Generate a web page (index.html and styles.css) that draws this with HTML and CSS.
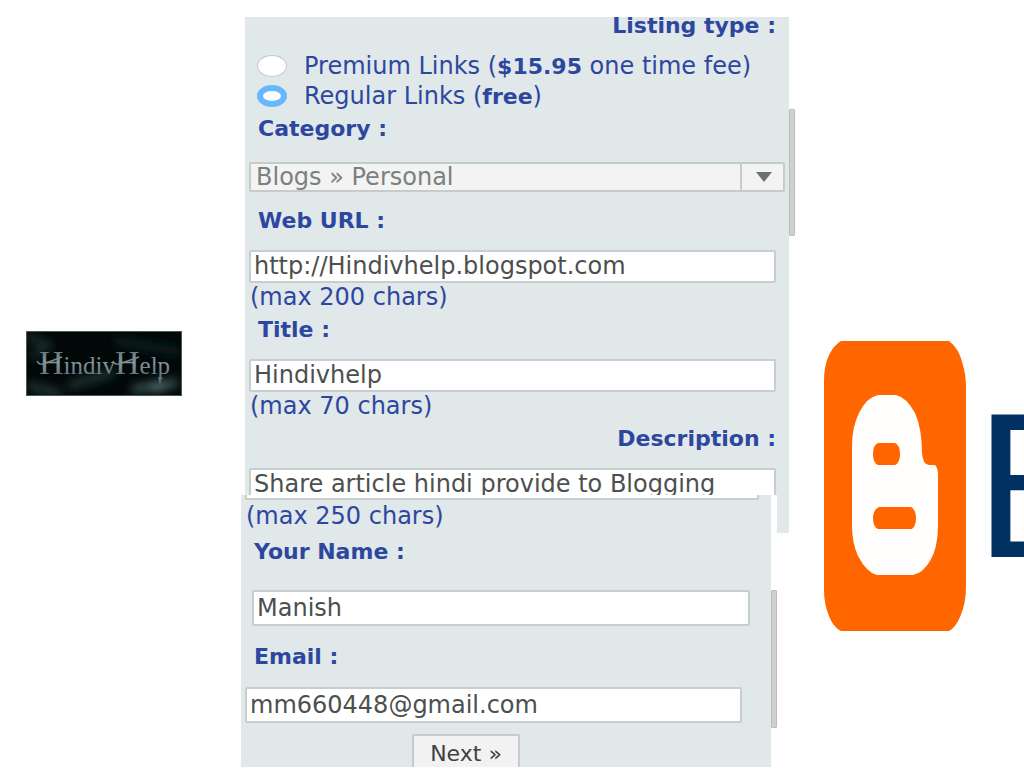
FILE: index.html
```html
<!DOCTYPE html>
<html lang="en">
<head>
<meta charset="utf-8">
<meta name="viewport" content="width=device-width, initial-scale=1">
<title>HindivHelp - Submit a link</title>
<link rel="stylesheet" href="styles.css">
</head>
<body>
<main class="page">
  <aside class="brand">
    <svg class="brand-logo" viewBox="0 0 156 65" role="img" aria-label="HindivHelp">
      <defs>
        <filter id="smoke" x="-50%" y="-50%" width="200%" height="200%"><feGaussianBlur stdDeviation="5"/></filter>
        <linearGradient id="steel" x1="0" y1="0" x2="0" y2="1">
          <stop offset="0" stop-color="#52646a"/><stop offset=".5" stop-color="#84979d"/><stop offset="1" stop-color="#52666c"/>
        </linearGradient>
      </defs>
      <rect width="156" height="65" fill="#020808"/>
      <g filter="url(#smoke)" fill="none" stroke-linecap="round">
        <path d="M2 6 L22 14 L8 24" stroke="#1b2e2e" stroke-width="7"/>
        <path d="M4 55 L32 62 M45 54 L85 42" stroke="#263b3b" stroke-width="7"/>
        <path d="M110 58 L148 52" stroke="#35504f" stroke-width="9"/>
        <path d="M92 10 L150 20" stroke="#0f2022" stroke-width="8"/>
        <path d="M128 56 L136 57" stroke="#6d8987" stroke-width="5"/>
      </g>
      <text class="brand-name" x="13" y="43" fill="url(#steel)"><tspan class="brand-cap">H</tspan>indiv<tspan class="brand-cap">H</tspan>elp</text>
      <path d="M11 30 Q13 35 20 32 L36 26 M87 30 Q89 35 96 32 L113 26" fill="none" stroke="#788c92" stroke-width="1.5"/>
      <path d="M132 46 L134 54 L136 46" fill="#5b7076"/>
      <rect x=".5" y=".5" width="155" height="64" fill="none" stroke="#4c5757"/>
    </svg>
  </aside>

  <form class="listing">
    <section class="sheet sheet-main">
      <fieldset class="types">
        <legend class="label label-end">Listing type :</legend>
        <label class="option"><input class="radio" type="radio" name="type"><span>Premium Links (<b>$15.95</b> one time fee)</span></label>
        <label class="option"><input class="radio" type="radio" name="type" checked><span>Regular Links (<b>free</b>)</span></label>
      </fieldset>
      <label class="label" for="category">Category :</label>
      <div class="picker">
        <select class="select" id="category"><option>Blogs » Personal</option></select>
        <span class="picker-arrow"><svg width="16" height="10" viewBox="0 0 16 10"><path d="M0 0H16L8 10Z" fill="#6d716f"/></svg></span>
      </div>
      <label class="label label-spaced" for="url">Web URL :</label>
      <input class="field" id="url" type="text" value="http://Hindivhelp.blogspot.com">
      <p class="hint">(max 200 chars)</p>
      <label class="label" for="title">Title :</label>
      <input class="field" id="title" type="text" value="Hindivhelp">
      <p class="hint">(max 70 chars)</p>
      <label class="label label-end" for="description">Description :</label>
      <input class="field" id="description" type="text" value="Share article hindi provide to Blogging">
      <span class="scroll scroll-main"></span>
    </section>

    <section class="overlay">
      <div class="sheet sheet-contact">
        <div class="field-edge"></div>
        <p class="hint">(max 250 chars)</p>
        <label class="label" for="name">Your Name :</label>
        <input class="field field-name" id="name" type="text" value="Manish">
        <label class="label label-spaced" for="email">Email :</label>
        <input class="field field-email" id="email" type="text" value="mm660448@gmail.com">
        <button class="next" type="button">Next »</button>
      </div>
      <span class="scroll scroll-contact"></span>
    </section>
  </form>

  <aside class="blogger">
    <svg class="blogger-icon" viewBox="0 0 142 290" role="img" aria-label="Blogger">
      <path d="M17 0H125Q135 7 139 24Q142 34 142 45V245Q142 263 136 276Q132 286 125 290H17Q9 286 5 275Q0 263 0 249V40Q0 25 5 14Q10 4 17 0Z" fill="#ff6600"/>
      <path d="M54 54H72Q82 56 91 72Q98 88 98 112Q99 124 105 124H111Q114 127 114 134V184Q114 207 106 220Q99 232 89 234H53Q43 232 34 215Q28 202 28 184V105Q28 86 35 72Q43 56 54 54Z" fill="#fffefd"/>
      <path d="M54 102H71Q76 104 76 113Q76 122 71 124H54Q49 122 49 113Q49 104 54 102ZM55 166H87Q92 169 92 177Q92 185 88 188H54Q49 186 49 177Q49 169 55 166Z" fill="#ff6600"/>
    </svg>
    <span class="blogger-word">B</span>
  </aside>
</main>
</body>
</html>
```
FILE: styles.css
```css
* { box-sizing: border-box; }

body {
  margin: 0;
  background: #fefefe;
  color: #2d479f;
  font-family: "DejaVu Sans", sans-serif;
  font-size: 24px;
}

.page {
  display: grid;
  grid-template-columns: 241fr 554fr 229fr;
  min-height: 100vh;
  overflow: hidden;
}

.brand { padding: 331px 59px 0 26px; }
.brand-logo { display: block; width: 100%; }
.brand-name { font-family: "Liberation Serif", serif; font-size: 25px; }
.brand-cap { font-size: 34px; }

.listing { min-width: 0; padding-top: 17px; }

.sheet { background: #e0e8ea; }

.sheet-main {
  position: relative;
  height: 516px;
  margin: 0 6px 0 4px;
  padding: 0 13px 0 4px;
}

.types { position: relative; min-width: 0; margin: 0; padding: 34px 0 0; border: 0; }
.types .label { position: absolute; top: -9px; right: 0; padding-right: 0; }

.label {
  display: block;
  padding-left: 9px;
  line-height: 36px;
  font-size: 22px;
  font-weight: 700;
  white-space: nowrap;
}
.label-end { text-align: right; }
.label-spaced { margin-top: 11px; }

.option {
  display: flex;
  align-items: center;
  gap: 17px;
  padding-left: 8px;
  line-height: 30px;
  white-space: nowrap;
}
.option b { font-size: 22px; line-height: 1; }

.radio {
  appearance: none;
  flex: none;
  width: 30px;
  height: 22px;
  margin: 0;
  border: 1px solid #c4c8ca;
  border-radius: 50%;
  background: #fff;
}
.radio:checked { border: 6px solid #66b8fb; }

.picker { position: relative; margin: 15px -9px 0 0; }

.select {
  appearance: none;
  display: block;
  width: 100%;
  height: 30px;
  padding: 0 50px 0 5px;
  border: 2px solid #c6cbcb;
  border-radius: 2px;
  background: #f3f3f3;
  color: #7c807f;
  font: inherit;
  line-height: 26px;
}
.picker-arrow {
  position: absolute;
  inset: 0 0 0 auto;
  display: grid;
  place-items: center;
  width: 45px;
  border-left: 2px solid #c6cbcb;
  pointer-events: none;
}

.field {
  display: block;
  width: 100%;
  height: 33px;
  margin: 11px 0 0;
  padding: 0 3px 2px;
  border: 2px solid #c8cdcd;
  border-radius: 2px;
  background: #fff;
  color: #4b504f;
  font: inherit;
}

.hint { margin: 0; padding-left: 1px; line-height: 29px; }

.overlay {
  position: relative;
  margin: -38px 18px 0 0;
  padding-right: 6px;
  background: #fefefe;
}

.sheet-contact { overflow: hidden; padding: 0 12px 0 4px; }

.field-edge {
  height: 5px;
  background: #fff;
  border: 2px solid #c8cdcd;
  border-top: 0;
}
.sheet-contact .hint { margin: 2px 0 3px; }
.sheet-contact .label-spaced { margin-top: 13px; }
.sheet-contact .field { height: 36px; padding-bottom: 0; }
.sheet-contact .field-name { width: auto; min-width: calc(100% - 16px); margin: 20px 9px 0 7px; }
.sheet-contact .field-email { width: calc(100% - 17px); margin-top: 12px; }

.next {
  display: block;
  width: 108px;
  height: 38px;
  margin: 11px auto -5px 167px;
  padding: 0;
  border: 2px solid #c6cbcb;
  border-radius: 2px;
  background: #f2f2f2;
  color: #3e4241;
  font: inherit;
  font-size: 22px;
}

.scroll {
  position: absolute;
  width: 6px;
  background: #d0d0d0;
  border: 1px solid #bcbcbc;
  border-radius: 1px;
}
.scroll-main { top: 92px; right: -6px; height: 127px; }
.scroll-contact { top: 95px; right: 0; height: 138px; }

.blogger {
  display: flex;
  align-items: center;
  gap: 9px;
  height: 290px;
  margin-top: 341px;
  padding-left: 29px;
  overflow: hidden;
}
.blogger-icon { flex: none; width: 142px; }
.blogger-word {
  padding-top: 6px;
  color: #003162;
  font-family: Roboto, sans-serif;
  font-size: 200px;
  font-weight: 400;
  line-height: 284px;
}
```
